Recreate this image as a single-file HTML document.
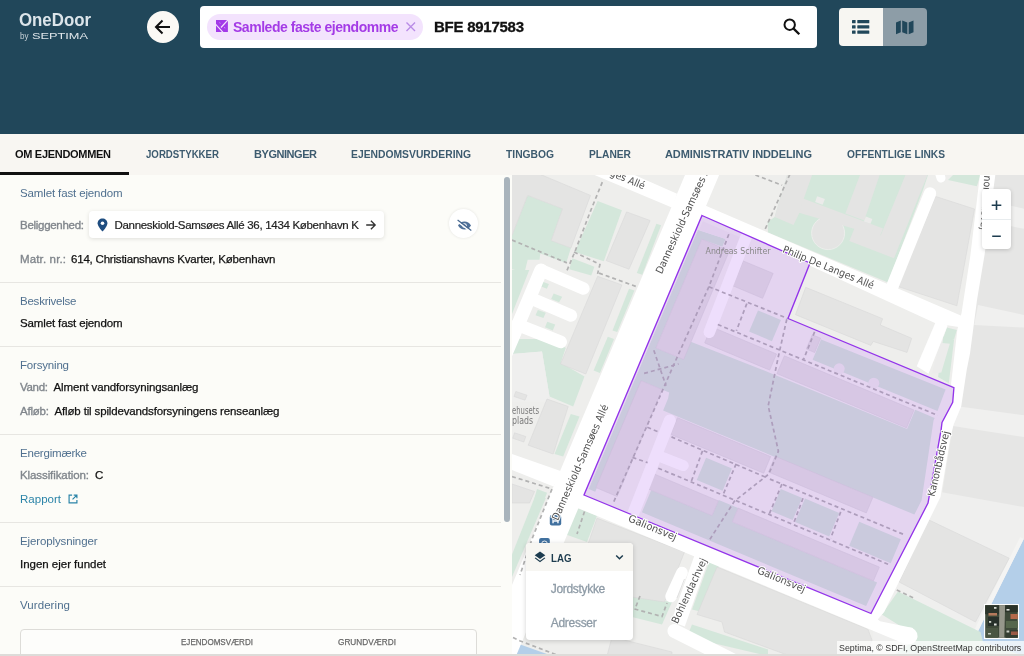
<!DOCTYPE html>
<html lang="da"><head><meta charset="utf-8"><title>OneDoor</title>
<style>
html,body{margin:0;padding:0;}
body{width:1024px;height:656px;overflow:hidden;position:relative;background:#fcfcf8;font-family:"Liberation Sans",sans-serif;}
.t{position:absolute;white-space:nowrap;line-height:20px;height:20px;}
.abs{position:absolute;}

.hdr{left:0;top:0;width:1024px;height:134px;background:#21475a;}
.tabs{left:0;top:134px;width:1024px;height:41px;background:#f8f6f2;}
.sep{left:0;width:501px;height:1px;background:#e7e6e2;}
.card{background:#fff;border-radius:4px;box-shadow:0 1px 4px rgba(0,0,0,.12);}

</style></head><body>
<svg class="abs" style="left:512px;top:175px;will-change:transform" width="512" height="481" viewBox="512 175 512 481"><rect x="512" y="175" width="512" height="481" fill="#eeeeec"/><polygon points="990.0,175.0 1024.0,175.0 1024.0,656.0 880.0,656.0 885.0,612.0 941.0,500.0 953.0,425.0 966.0,320.0 975.0,250.0" fill="#e6e6e5" /><polygon points="955.5,406.0 1024.0,415.2 1024.0,437.0 951.2,425.8" fill="#f0f0ef" /><polygon points="1008.0,205.0 1024.0,208.8 1024.0,228.8 1005.5,225.0" fill="#f0f0ef" /><polygon points="978.0,305.0 1024.0,315.0 1024.0,327.5 974.2,325.0" fill="#f0f0ef" /><polygon points="940.5,492.0 1024.0,507.0 1024.0,656.0 873.0,656.0 873.0,612.0" fill="#efefee" /><polygon points="1024.0,538.5 1024.0,656.0 965.4,656.0 979.3,628.2 995.4,596.0" fill="#b4cfe9" /><polyline points="1022.0,538.0 992.0,598.0 964.0,656.0" fill="none" stroke="#f4f4f3" stroke-width="4" /><polygon points="928.0,519.5 1009.2,558.2 975.5,622.0 899.2,582.0" fill="#e4e4e3" stroke="#d9d9d8" stroke-width="0.600"/><polygon points="881.8,614.5 898.0,591.5 980.5,632.0 983.0,642.0 1024.0,656.0 893.0,656.0 918.0,637.0" fill="#d4e7db" /><polygon points="527.7,195.4 562.5,208.8 551.2,240.6 570.9,248.0 566.2,262.9 540.3,253.5 539.5,259.8 527.7,259.8 524.6,272.3 512.0,269.2 512.0,235.4" fill="#d4e7db" /><polygon points="597.6,200.9 621.9,210.3 603.8,261.3 574.8,251.9" fill="#d4e7db" /><polygon points="572.4,258.2 594.4,266.8 591.3,275.5 569.3,269.2" fill="#d4e7db" /><polygon points="656.4,223.7 661.1,225.2 642.3,274.7 636.8,273.1" fill="#d4e7db" /><polygon points="629.0,288.8 634.4,290.4 617.2,332.0 612.5,330.4" fill="#d4e7db" /><polygon points="607.8,336.7 614.0,339.1 599.9,373.0 593.6,370.5" fill="#d4e7db" /><polygon points="512.0,270.0 529.3,270.0 512.0,314.0" fill="#d4e7db" /><polygon points="512.0,339.0 542.0,339.0 565.8,347.8 560.8,362.8 584.5,376.5 573.2,406.5 549.5,396.5 542.0,351.5 512.0,354.0" fill="#d4e7db" /><polygon points="570.8,414.0 579.5,416.5 563.2,456.5 554.5,454.0" fill="#d4e7db" /><polygon points="542.6,281.8 548.9,284.1 546.9,288.8 541.0,286.5" fill="#d4e7db" /><polygon points="553.6,293.5 562.2,296.7 559.1,302.2 551.2,299.0" fill="#d4e7db" /><polygon points="537.9,310.0 545.8,312.7 543.4,317.9 535.5,315.2" fill="#d4e7db" /><polygon points="547.3,321.8 555.2,324.6 552.8,330.4 545.0,327.3" fill="#d4e7db" /><polygon points="512.0,354.0 542.0,351.5 549.5,396.5 547.0,401.5 512.0,401.5" fill="#efefee" /><polygon points="510.4,173.4 537.9,173.4 590.5,195.4 570.9,248.0 551.2,240.6 562.5,208.8 527.7,195.4 512.0,235.4 510.4,235.4" fill="#e4e4e3" stroke="#d9d9d8" stroke-width="0.600"/><polygon points="626.6,211.9 650.1,220.5 629.0,269.2 606.2,260.6" fill="#e4e4e3" stroke="#d9d9d8" stroke-width="0.600"/><polygon points="597.6,276.3 621.9,284.9 585.8,374.0 560.5,364.0" fill="#e4e4e3" stroke="#d9d9d8" stroke-width="0.600"/><polygon points="547.0,399.0 568.2,406.5 553.2,454.0 528.2,445.2" fill="#e4e4e3" stroke="#d9d9d8" stroke-width="0.600"/><polygon points="515.8,391.5 527.0,395.2 525.0,400.2 514.0,396.5" fill="#e4e4e3" stroke="#d9d9d8" stroke-width="0.600"/><polygon points="514.5,432.8 525.8,436.5 523.8,442.0 512.8,438.2" fill="#e4e4e3" stroke="#d9d9d8" stroke-width="0.600"/><polygon points="767.6,222.1 774.7,217.1 787.3,174.2 928.0,175.0 923.0,190.0 888.0,282.5 768.0,232.5" fill="#d4e7db" /><circle cx="828.1" cy="233.1" r="16.500" fill="#e4e4e3" stroke="#efefee" stroke-width="0.800"/><polygon points="787.3,174.2 812.4,174.2 803.8,198.5 799.8,211.9 793.5,224.9 774.7,217.1" fill="#e4e4e3" /><polygon points="803.0,198.5 883.0,228.4 879.9,236.2 799.0,212.7" fill="#e4e4e3" /><polygon points="860.3,174.2 879.9,174.2 864.2,220.5 845.4,213.5" fill="#e4e4e3" /><polygon points="905.8,174.2 927.8,174.2 894.0,258.2 849.3,240.9 855.6,225.5 880.7,235.4" fill="#e4e4e3" /><polygon points="817.1,196.2 824.9,198.9 822.6,204.8 815.2,202.0" fill="#ebebea" /><polygon points="865.8,216.6 872.4,219.0 870.5,223.7 863.9,221.5" fill="#ebebea" /><polygon points="935.5,196.4 974.5,209.0 956.9,305.8 898.0,286.5" fill="#e4e4e3" stroke="#d9d9d8" stroke-width="0.600"/><polygon points="953.0,175.0 980.5,175.0 976.8,186.2 948.0,180.0" fill="#d4e7db" /><polygon points="946.8,327.5 956.8,330.0 954.2,339.0 943.0,339.0" fill="#d4e7db" /><polygon points="805.7,287.3 882.6,318.7 880.3,325.0 911.7,338.3 907.0,352.4 873.2,341.4 870.8,345.4 795.5,314.7" fill="#e4e4e3" stroke="#d9d9d8" stroke-width="0.600"/><polygon points="943.4,336.3 954.1,339.5 948.8,383.3 938.1,376.9" fill="#d4e7db" /><polygon points="940.2,342.7 949.8,343.8 941.3,372.6 931.7,373.7" fill="#ececeb" /><polygon points="574.5,507.0 597.0,515.8 587.0,542.0 565.8,534.5" fill="#d4e7db" /><polygon points="632.0,597.0 672.0,602.0 662.0,624.5 632.0,617.0" fill="#d4e7db" /><polygon points="709.5,560.8 719.5,564.5 702.0,612.0 692.0,609.5" fill="#d4e7db" /><polygon points="692.0,624.5 768.0,649.5 768.0,656.0 687.0,637.0" fill="#d4e7db" /><polygon points="597.0,518.2 684.5,552.0 664.5,602.0 632.0,597.0 633.2,609.5 587.0,592.0 584.5,574.5 587.0,547.0" fill="#e4e4e3" stroke="#d9d9d8" stroke-width="0.600"/><polygon points="717.0,567.0 868.0,629.4 872.0,640.0 866.0,656.0 790.0,656.0 724.5,632.0 722.0,622.0 697.0,614.5" fill="#e4e4e3" stroke="#d9d9d8" stroke-width="0.600"/><polygon points="612.0,637.0 672.0,652.0 672.0,656.0 607.0,656.0" fill="#e4e4e3" stroke="#d9d9d8" stroke-width="0.600"/><polygon points="535.8,494.5 545.8,498.2 512.0,577.0 512.0,554.5" fill="#d4e7db" /><polygon points="518.9,644.0 552.5,656.0 515.0,656.0" fill="#b4cfe9" /><polygon points="512.0,484.0 534.5,491.5 529.5,503.0 512.0,503.0" fill="#e4e4e3" stroke="#d9d9d8" stroke-width="0.600"/><polygon points="537.0,489.0 547.0,492.8 543.2,503.0 533.2,503.0" fill="#d4e7db" /><polygon points="685.0,175.0 719.1,175.0 516.0,656.0 482.0,656.0" fill="#ffffff" /><polygon points="700.0,203.3 966.0,317.7 962.0,327.6 936.0,323.6 700.0,215.1" fill="#ffffff" /><polygon points="677.0,193.7 634.5,175.0 594.5,175.0 673.0,208.0" fill="#ffffff" /><polyline points="892.5,286.0 930.0,193.5" fill="none" stroke="#ffffff" stroke-width="12.5" stroke-linecap="round"/><polygon points="980.5,170.0 970.4,255.2 961.6,312.8 957.3,330.0 951.0,384.4 953.9,387.7 952.7,402.3 942.0,422.4 941.1,429.8 928.0,503.0 871.0,613.5 873.0,625.0 884.2,612.0 940.5,497.0 950.5,437.0 953.5,425.0 961.2,406.6 966.7,370.0 970.0,353.4 977.0,300.0 984.5,255.2 996.0,170.0" fill="#ffffff" /><polygon points="935.9,321.4 947.7,325.6 928.5,373.7 916.7,366.2" fill="#ffffff" /><polyline points="938.0,168.0 941.0,178.0" fill="none" stroke="#ffffff" stroke-width="9" stroke-linecap="round"/><polygon points="570.0,488.2 871.0,613.5 880.0,621.2 913.0,628.0 905.0,644.0 570.0,504.7" fill="#ffffff" /><circle cx="909" cy="636" r="8.500" fill="#fff"/><polyline points="702.7,554.0 678.0,624.0" fill="none" stroke="#ffffff" stroke-width="14.5" /><polyline points="674.5,631.0 760.0,674.0" fill="none" stroke="#ffffff" stroke-width="14" stroke-linecap="round"/><polyline points="682.0,572.5 671.0,596.5" fill="none" stroke="#ffffff" stroke-width="11.5" stroke-linecap="round"/><polyline points="684.5,579.0 677.0,598.0" fill="none" stroke="#dedede" stroke-width="0.9" /><polygon points="510.0,453.2 562.0,471.6 553.5,486.5 510.0,469.3" fill="#ffffff" /><polyline points="541.0,270.3 512.0,339.0 500.0,367.0" fill="none" stroke="#ffffff" stroke-width="13.5" stroke-linecap="round"/><polyline points="542.0,270.7 583.4,288.5" fill="none" stroke="#ffffff" stroke-width="12.5" stroke-linecap="round"/><polyline points="529.5,297.7 570.9,315.5" fill="none" stroke="#ffffff" stroke-width="12.5" stroke-linecap="round"/><polyline points="517.2,324.6 560.7,341.9" fill="none" stroke="#ffffff" stroke-width="12.5" stroke-linecap="round"/><polyline points="602.3,182.1 590.5,211.1 574.8,251.9 566.2,272.3" fill="none" stroke="#b2b2b2" stroke-width="1.7" stroke-dasharray="4 3"/><polyline points="512.0,240.1 566.9,262.9" fill="none" stroke="#b2b2b2" stroke-width="1.7" stroke-dasharray="4 3"/><polyline points="574.0,251.9 599.9,264.5 597.6,273.9" fill="none" stroke="#b2b2b2" stroke-width="1.7" stroke-dasharray="4 3"/><polyline points="599.1,273.1 636.0,286.5" fill="none" stroke="#b2b2b2" stroke-width="1.7" stroke-dasharray="4 3"/><polyline points="512.0,476.5 552.0,489.0 532.0,539.0 520.0,575.0" fill="none" stroke="#b2b2b2" stroke-width="1.7" stroke-dasharray="4 3"/><polyline points="584.5,511.5 577.0,534.0" fill="none" stroke="#b2b2b2" stroke-width="1.7" stroke-dasharray="4 3"/><polyline points="634.5,609.0 662.0,616.5 667.0,603.0" fill="none" stroke="#b2b2b2" stroke-width="1.7" stroke-dasharray="4 3"/><polyline points="640.0,596.0 635.0,609.0" fill="none" stroke="#b2b2b2" stroke-width="1.7" stroke-dasharray="4 3"/><polyline points="513.0,637.5 519.7,640.8 552.5,653.3 562.0,657.0" fill="none" stroke="#b2b2b2" stroke-width="1.7" stroke-dasharray="4 3"/><polyline points="789.9,174.2 764.8,229.9" fill="none" stroke="#b2b2b2" stroke-width="1.7" stroke-dasharray="4 3"/><polyline points="755.4,175.0 782.1,185.2" fill="none" stroke="#b2b2b2" stroke-width="1.7" stroke-dasharray="4 3"/><polygon points="702.0,215.5 810.0,263.0 788.0,318.5 953.9,387.7 952.7,402.3 942.0,422.4 941.1,429.8 928.0,503.0 871.0,613.5 584.0,495.0" fill="#f3f3f1" /><polygon points="698.0,230.1 725.7,239.0 722.4,246.8 701.8,239.2 595.2,491.7 588.8,489.0" fill="#d4e7db" /><polygon points="702.8,221.3 740.5,237.5 734.4,251.8 722.4,246.8 725.7,239.0 699.1,230.0" fill="#efeeed" /><polygon points="758.0,310.4 780.9,320.0 771.9,341.2 749.1,331.6" fill="#d4e7db" /><polygon points="821.1,339.5 945.6,389.4 937.5,411.0 812.6,359.8" fill="#d4e7db" /><polygon points="679.9,337.4 772.0,373.7 907.1,429.1 915.2,409.8 934.6,417.9 933.5,420.6 921.6,500.2 914.4,514.6 663.1,410.6 668.1,398.6" fill="#d4e7db" /><polygon points="706.1,457.8 731.9,468.6 722.6,490.7 696.8,479.9" fill="#d4e7db" /><polygon points="780.8,489.1 802.1,497.9 792.7,520.0 771.5,511.2" fill="#d4e7db" /><polygon points="805.0,498.6 839.2,512.9 829.2,536.4 795.1,522.1" fill="#d4e7db" /><polygon points="859.3,521.8 900.8,539.2 890.7,563.2 849.2,545.8" fill="#d4e7db" /><polygon points="651.2,490.2 712.1,515.6 718.7,500.0 738.1,508.1 732.3,521.9 877.1,582.4 866.1,606.0 641.9,512.3" fill="#d4e7db" /><polygon points="654.9,347.6 684.5,359.9 670.5,393.1 641.0,380.7" fill="#d4e7db" /><circle cx="839.2" cy="368.8" r="5.500" fill="#eeeeec"/><circle cx="873.8" cy="383.2" r="5.500" fill="#eeeeec"/><polygon points="701.8,239.2 729.4,250.8 683.6,359.5 655.9,348.0" fill="#e4e4e3" stroke="#d9d9d8" stroke-width="0.600"/><polygon points="743.1,260.9 773.1,273.4 762.6,298.3 732.6,285.7" fill="#e4e4e3" stroke="#d9d9d8" stroke-width="0.600"/><polygon points="711.5,326.8 776.5,354.0 769.7,370.1 704.7,342.9" fill="#e4e4e3" stroke="#d9d9d8" stroke-width="0.600"/><polygon points="812.3,334.8 820.6,338.2 814.6,352.5 806.3,349.0" fill="#e4e4e3" stroke="#d9d9d8" stroke-width="0.600"/><polygon points="784.4,355.8 914.0,410.0 906.5,427.8 776.9,373.6" fill="#e4e4e3" stroke="#d9d9d8" stroke-width="0.600"/><polygon points="641.0,380.7 662.2,389.6 617.1,496.5 595.9,487.6" fill="#e4e4e3" stroke="#d9d9d8" stroke-width="0.600"/><polygon points="677.5,417.7 770.6,456.6 763.7,473.2 670.5,434.3" fill="#e4e4e3" stroke="#d9d9d8" stroke-width="0.600"/><polygon points="775.1,456.3 872.9,497.2 866.3,512.9 768.5,472.0" fill="#e4e4e3" stroke="#d9d9d8" stroke-width="0.600"/><polygon points="650.1,472.3 718.3,500.9 712.1,515.6 643.8,487.1" fill="#e4e4e3" stroke="#d9d9d8" stroke-width="0.600"/><polygon points="738.1,508.1 879.3,567.1 873.4,580.9 732.3,521.9" fill="#e4e4e3" stroke="#d9d9d8" stroke-width="0.600"/><polyline points="746.0,237.2 709.2,332.3" fill="none" stroke="#ffffff" stroke-width="11.5" stroke-linecap="round"/><polyline points="669.8,420.4 633.4,513.1" fill="none" stroke="#ffffff" stroke-width="12" stroke-linecap="round"/><polyline points="657.2,455.3 683.3,465.6" fill="none" stroke="#ffffff" stroke-width="11" stroke-linecap="round"/><polyline points="728.8,234.3 708.9,286.7 673.2,366.0 613.0,503.5" fill="none" stroke="#b2b2b2" stroke-width="1.7" stroke-dasharray="4 3"/><polyline points="708.9,286.7 787.2,318.3" fill="none" stroke="#b2b2b2" stroke-width="1.7" stroke-dasharray="4 3"/><polyline points="717.8,324.5 937.8,415.4" fill="none" stroke="#b2b2b2" stroke-width="1.7" stroke-dasharray="4 3"/><polyline points="746.8,303.6 736.4,330.7" fill="none" stroke="#b2b2b2" stroke-width="1.7" stroke-dasharray="4 3"/><polyline points="814.6,331.9 803.4,359.8" fill="none" stroke="#b2b2b2" stroke-width="1.7" stroke-dasharray="4 3"/><polyline points="769.9,479.1 904.8,534.9" fill="none" stroke="#b2b2b2" stroke-width="1.7" stroke-dasharray="4 3"/><polyline points="658.3,468.2 889.0,564.6" fill="none" stroke="#b2b2b2" stroke-width="1.7" stroke-dasharray="4 3"/><polyline points="671.5,436.9 765.3,477.1" fill="none" stroke="#b2b2b2" stroke-width="1.7" stroke-dasharray="4 3"/><polyline points="647.3,427.3 658.4,431.9" fill="none" stroke="#b2b2b2" stroke-width="1.7" stroke-dasharray="4 3"/><polyline points="632.5,457.4 647.6,462.6" fill="none" stroke="#b2b2b2" stroke-width="1.7" stroke-dasharray="4 3"/><polyline points="653.8,350.3 666.0,385.8" fill="none" stroke="#b2b2b2" stroke-width="1.7" stroke-dasharray="4 3"/><polyline points="644.1,373.4 678.5,363.9" fill="none" stroke="#b2b2b2" stroke-width="1.7" stroke-dasharray="4 3"/><polyline points="786.8,319.2 778.5,355.8 768.2,405.8 778.4,451.2 768.7,474.2 734.5,501.1 709.2,540.4" fill="none" stroke="#b2b2b2" stroke-width="1.7" stroke-dasharray="4 3"/><polyline points="803.0,498.3 794.2,521.7" fill="none" stroke="#b2b2b2" stroke-width="1.7" stroke-dasharray="4 3"/><polyline points="840.7,511.9 830.7,538.1" fill="none" stroke="#b2b2b2" stroke-width="1.7" stroke-dasharray="4 3"/><polyline points="781.9,484.1 769.0,514.5" fill="none" stroke="#b2b2b2" stroke-width="1.7" stroke-dasharray="4 3"/><polyline points="702.5,450.9 691.1,481.9" fill="none" stroke="#b2b2b2" stroke-width="1.7" stroke-dasharray="4 3"/><polyline points="736.1,463.9 722.9,495.2" fill="none" stroke="#b2b2b2" stroke-width="1.7" stroke-dasharray="4 3"/><polyline points="896.8,590.0 914.2,598.2" fill="none" stroke="#b2b2b2" stroke-width="1.7" stroke-dasharray="4 3"/><polygon points="702.0,215.5 810.0,263.0 788.0,318.5 953.9,387.7 952.7,402.3 942.0,422.4 941.1,429.8 928.0,503.0 871.0,613.5 584.0,495.0" fill="rgba(147,51,234,0.16)" stroke="#9333ea" stroke-width="1.350" stroke-linejoin="miter"/><rect x="549.800" y="514.900" width="11.400" height="10.700" rx="2" fill="#41719f"/><path d="M552.300 517.500h6.400v5.800h-1.500v-1.600h-3.400v1.600h-1.500z" fill="#eef3f8"/><rect x="553.300" y="518.400" width="4.400" height="1.800" fill="#41719f"/><rect x="539.100" y="538.100" width="10.700" height="10.700" rx="2" fill="#41719f"/><circle cx="544.500" cy="543.800" r="2.800" fill="none" stroke="#eef3f8" stroke-width="1"/><text font-family="DejaVu Sans, Liberation Sans, sans-serif" x="828.5" y="267.3" transform="rotate(22.3 828.5 267.3)" font-size="10.2" font-weight="400" fill="#505050" text-anchor="middle" dominant-baseline="central" textLength="97.6" lengthAdjust="spacingAndGlyphs" paint-order="stroke" stroke="#ffffff" stroke-width="2.200" stroke-linejoin="round">Philip De Langes Allé</text><text font-family="DejaVu Sans, Liberation Sans, sans-serif" x="599.6" y="167.5" transform="rotate(22.7 599.6 167.5)" font-size="10.2" font-weight="400" fill="#505050" text-anchor="middle" dominant-baseline="central" textLength="97.6" lengthAdjust="spacingAndGlyphs" paint-order="stroke" stroke="#ffffff" stroke-width="2.200" stroke-linejoin="round">Philip De Langes Allé</text><text font-family="DejaVu Sans, Liberation Sans, sans-serif" x="684.9" y="215.7" transform="rotate(-65.3 684.9 215.7)" font-size="10.2" font-weight="400" fill="#505050" text-anchor="middle" dominant-baseline="central" textLength="126.0" lengthAdjust="spacingAndGlyphs" paint-order="stroke" stroke="#ffffff" stroke-width="2.200" stroke-linejoin="round">Danneskiold-Samsøes Allé</text><text font-family="DejaVu Sans, Liberation Sans, sans-serif" x="580.1" y="462.3" transform="rotate(-66.2 580.1 462.3)" font-size="10.2" font-weight="400" fill="#505050" text-anchor="middle" dominant-baseline="central" textLength="125.0" lengthAdjust="spacingAndGlyphs" paint-order="stroke" stroke="#ffffff" stroke-width="2.200" stroke-linejoin="round">Danneskiold-Samsøes Allé</text><text font-family="DejaVu Sans, Liberation Sans, sans-serif" x="938.6" y="463.6" transform="rotate(-77.0 938.6 463.6)" font-size="10.2" font-weight="400" fill="#505050" text-anchor="middle" dominant-baseline="central" textLength="66.7" lengthAdjust="spacingAndGlyphs" paint-order="stroke" stroke="#ffffff" stroke-width="2.200" stroke-linejoin="round">Kanonbådsvej</text><text font-family="DejaVu Sans, Liberation Sans, sans-serif" x="986.3" y="196.8" transform="rotate(94.0 986.3 196.8)" font-size="10.2" font-weight="400" fill="#505050" text-anchor="middle" dominant-baseline="central" textLength="66.7" lengthAdjust="spacingAndGlyphs" paint-order="stroke" stroke="#ffffff" stroke-width="2.200" stroke-linejoin="round">Kanonbådsvej</text><text font-family="DejaVu Sans, Liberation Sans, sans-serif" x="652.7" y="527.6" transform="rotate(22.2 652.7 527.6)" font-size="10.2" font-weight="400" fill="#505050" text-anchor="middle" dominant-baseline="central" textLength="51.4" lengthAdjust="spacingAndGlyphs" paint-order="stroke" stroke="#ffffff" stroke-width="2.200" stroke-linejoin="round">Galionsvej</text><text font-family="DejaVu Sans, Liberation Sans, sans-serif" x="781.5" y="579.5" transform="rotate(22.4 781.5 579.5)" font-size="10.2" font-weight="400" fill="#505050" text-anchor="middle" dominant-baseline="central" textLength="51.4" lengthAdjust="spacingAndGlyphs" paint-order="stroke" stroke="#ffffff" stroke-width="2.200" stroke-linejoin="round">Galionsvej</text><text font-family="DejaVu Sans, Liberation Sans, sans-serif" x="689.2" y="590.7" transform="rotate(-65.2 689.2 590.7)" font-size="10.2" font-weight="400" fill="#505050" text-anchor="middle" dominant-baseline="central" textLength="70.5" lengthAdjust="spacingAndGlyphs" paint-order="stroke" stroke="#ffffff" stroke-width="2.200" stroke-linejoin="round">Bohlendachvej</text><text font-family="DejaVu Sans, Liberation Sans, sans-serif" x="738.0" y="250.8" transform="rotate(0.0 738.0 250.8)" font-size="9.5" font-weight="400" fill="#888888" text-anchor="middle" dominant-baseline="central" textLength="65.0" lengthAdjust="spacingAndGlyphs">Andreas Schifter</text><text font-family="DejaVu Sans, Liberation Sans, sans-serif" x="512.0" y="410.0" transform="rotate(0.0 512.0 410.0)" font-size="10" font-weight="400" fill="#7a7a7a" text-anchor="start" dominant-baseline="central" textLength="27.0" lengthAdjust="spacingAndGlyphs">ehusets</text><text font-family="DejaVu Sans, Liberation Sans, sans-serif" x="512.0" y="420.5" transform="rotate(0.0 512.0 420.5)" font-size="10" font-weight="400" fill="#7a7a7a" text-anchor="start" dominant-baseline="central" textLength="21.0" lengthAdjust="spacingAndGlyphs">plads</text></svg>
<div class="abs hdr"></div><div class="abs tabs"></div><div class="abs" style="left:0;top:172px;width:129px;height:3px;background:#111;"></div><div class="abs" style="left:147px;top:11px;width:32px;height:32px;border-radius:50%;background:#fbf9f5;"></div><svg class="abs" style="left:147px;top:11px" width="32" height="32" viewBox="0 0 32 32"><path d="M23 16H9.5M15.5 9.5L9 16l6.500 6.500" fill="none" stroke="#111" stroke-width="2" stroke-linecap="butt" stroke-linejoin="miter"/></svg><div class="abs" style="left:200px;top:6px;width:617px;height:42px;border-radius:4px;background:#fff;"></div><div class="abs" style="left:207px;top:14px;width:216px;height:26px;border-radius:13px;background:#f3e3fd;"></div><svg class="abs" style="left:215.900px;top:20.200px" width="12" height="12.300" viewBox="0 0 12 12.300"><rect x="0" y="0" width="11.900" height="12.300" fill="#a33ae8"/><path d="M-0.300 4.300L7.200 12.600M12 -0.200L5 7.500" stroke="#f3e3fd" stroke-width="1.150" fill="none"/><path d="M3.700 2.500l0.500 1M8.500 7.200l0.500 1.100" stroke="#e2b8fa" stroke-width="0.800" fill="none"/></svg><svg class="abs" style="left:405px;top:21px" width="12" height="12" viewBox="0 0 12 12"><path d="M1.500 1.500l8.500 8.500M10 1.500l-8.500 8.500" stroke="#b98be6" stroke-width="1.400" fill="none"/></svg><svg class="abs" style="left:781px;top:16px" width="22" height="22" viewBox="0 0 22 22"><circle cx="8.700" cy="8.700" r="5.200" fill="none" stroke="#111" stroke-width="2"/><path d="M12.600 12.600L18.300 18.300" stroke="#111" stroke-width="2.300" fill="none"/></svg><div class="abs" style="left:839px;top:8px;width:44px;height:37.500px;border-radius:4px 0 0 4px;background:#f7f6f2;"></div><div class="abs" style="left:883px;top:8px;width:44px;height:37.500px;border-radius:0 4px 4px 0;background:#8d9da7;"></div><svg class="abs" style="left:852px;top:20px" width="18" height="14" viewBox="0 0 18 14"><g fill="#21475a"><rect x="0" y="0" width="3.600" height="3.200" rx=".5"/><rect x="5.300" y="0" width="12" height="3.200" rx=".5"/><rect x="0" y="5.300" width="3.600" height="3.200" rx=".5"/><rect x="5.300" y="5.300" width="12" height="3.200" rx=".5"/><rect x="0" y="10.600" width="3.600" height="3.200" rx=".5"/><rect x="5.300" y="10.600" width="12" height="3.200" rx=".5"/></g></svg><svg class="abs" style="left:895.500px;top:19.500px" width="18" height="15" viewBox="0 0 18 15"><g fill="#21475a"><path d="M0 2.500L4.800 0.500V12.200L0 14.200z"/><path d="M6.200 0.500L11.300 2.500V14.200L6.200 12.200z"/><path d="M12.700 2.500L17.500 0.500V12.200L12.700 14.200z"/></g></svg><div class="abs sep" style="top:282px"></div><div class="abs sep" style="top:345.7px"></div><div class="abs sep" style="top:434.2px"></div><div class="abs sep" style="top:522.4px"></div><div class="abs sep" style="top:586.1px"></div><div class="abs" style="left:504px;top:177px;width:5.500px;height:345px;border-radius:3px;background:#a9b4bc;"></div><div class="abs card" style="left:89px;top:210.500px;width:294.700px;height:27px;"></div><svg class="abs" style="left:97px;top:218px" width="11" height="14" viewBox="0 0 11 14"><path d="M5.500 0.500C2.700 0.500 0.600 2.600 0.600 5.300c0 3.400 4.900 8.200 4.900 8.200s4.900-4.800 4.900-8.200C10.400 2.600 8.300 0.500 5.500 0.500z" fill="#1f4d80"/><circle cx="5.500" cy="5.200" r="1.800" fill="#fff"/></svg><svg class="abs" style="left:365px;top:218.600px" width="12" height="12" viewBox="0 0 12 12"><path d="M1.200 6h8.800M5.900 1.700L10.200 6l-4.300 4.300" fill="none" stroke="#333" stroke-width="1.300"/></svg><div class="abs" style="left:449px;top:209px;width:29px;height:29px;border-radius:50%;background:#fff;box-shadow:0 0 3px rgba(0,0,0,.10);"></div><svg class="abs" style="left:456.500px;top:218.500px" width="15" height="12" viewBox="0 0 15 12"><path d="M1 6.500C2.500 3.900 4.800 2.600 7.500 2.600S12.500 3.900 14 6.500C12.500 9.100 10.200 10.400 7.500 10.400S2.500 9.100 1 6.500z" fill="#4f7099"/><circle cx="7.500" cy="6.500" r="2.300" fill="#fff"/><circle cx="7.500" cy="6.500" r="1.200" fill="#4f7099"/><path d="M-0.400 1.900L13.300 12.300" stroke="#fff" stroke-width="1.500"/><path d="M0.600 1L14.300 11.400" stroke="#46678f" stroke-width="1.200"/></svg><svg class="abs" style="left:68px;top:494.200px" width="10" height="10" viewBox="0 0 11 11"><path d="M4.500 1.200H1.200V9.800H9.800V6.500" fill="none" stroke="#2b84a8" stroke-width="1.300"/><path d="M6.300 1.200H9.800V4.700M9.800 1.200L5 6" fill="none" stroke="#2b84a8" stroke-width="1.300"/></svg><div class="abs" style="left:20px;top:628.500px;width:457px;height:40px;border:1px solid #dddcd8;border-radius:4px;background:#fdfdfb;box-sizing:border-box;"></div><div class="abs" style="left:981.500px;top:189px;width:29.500px;height:59.500px;border-radius:4px;background:#fff;box-shadow:0 1px 4px rgba(0,0,0,.18);"></div><div class="abs" style="left:982px;top:219px;width:29px;height:1px;background:#e8ecee;"></div><svg class="abs" style="left:982px;top:189.500px" width="29" height="59" viewBox="0 0 29 59"><path d="M9.700 15.300h9.600M14.500 10.500v9.600M10.200 46.300h8.600" stroke="#1d3c4f" stroke-width="1.600" fill="none"/></svg><div class="abs" style="left:526px;top:543px;width:107px;height:97px;border-radius:4px;background:#fff;box-shadow:0 1px 5px rgba(0,0,0,.18);overflow:hidden;"><div style="height:27.500px;background:#f7f6f2;"></div></div><svg class="abs" style="left:534px;top:551px" width="12" height="12" viewBox="0 0 12 12"><path d="M6 0.500L11.300 4.300 6 8.100 0.700 4.300z" fill="#1d3c4f"/><path d="M1.500 6.600L6 9.800 10.500 6.600 11.300 7.300 6 11.200 0.700 7.300z" fill="#1d3c4f"/></svg><svg class="abs" style="left:615px;top:553.500px" width="9" height="7" viewBox="0 0 9 7"><path d="M1.200 1.500L4.500 4.800 7.800 1.500" stroke="#1d3c4f" stroke-width="1.500" fill="none"/></svg><div class="abs" style="left:836.500px;top:641px;width:187.500px;height:15px;background:rgba(255,255,255,.72);"></div><svg class="abs" style="left:984px;top:604px" width="35" height="35" viewBox="0 0 35 35"><rect x="0" y="0" width="35" height="35" fill="#fff"/><rect x="1.200" y="1.200" width="32.600" height="32.600" fill="#3e4939"/><rect x="1.200" y="1.200" width="14" height="9" fill="#2c352b"/><rect x="4" y="13" width="11" height="9" fill="#27302a"/><rect x="2" y="24" width="12" height="9.800" fill="#4a5643"/><rect x="21" y="1.200" width="12.800" height="7" fill="#2b3329"/><rect x="22" y="17" width="11.800" height="7" fill="#56664c"/><rect x="21.500" y="26" width="12.300" height="7.800" fill="#343d31"/><path d="M15.300 1.200h5.800l-0.800 32.600h-5.200z" fill="#96978b"/><rect x="4.500" y="9" width="8.500" height="2.600" fill="#b47a5c"/><rect x="26.500" y="10" width="7.300" height="5" fill="#b4694a"/><rect x="27" y="27.500" width="6.800" height="3.500" fill="#9a5a46"/><rect x="10" y="3" width="2.500" height="1.800" fill="#d9ddd6"/><rect x="22.500" y="5" width="3" height="1.600" fill="#dfe2dc"/><rect x="5" y="17" width="2.200" height="1.800" fill="#cfd5cc"/><rect x="10" y="19.500" width="2.600" height="2" fill="#e2e5e0"/><rect x="22.500" y="26.500" width="2.800" height="2" fill="#c9cec5"/><rect x="4" y="29" width="3" height="1.500" fill="#bfc6ba"/></svg>
<div class="abs" style="left:0;top:0;width:1024px;height:656px;will-change:transform;"><span class="t" style="left:19.00px;top:10.02px;font-size:19px;font-weight:700;color:#dce5ea;letter-spacing:0.000px;transform:scaleX(0.8858);transform-origin:0 50%;">OneDoor</span><span class="t" style="left:19.50px;top:25.71px;font-size:9.5px;font-weight:400;color:#c5d0d6;letter-spacing:0.000px;transform:scaleX(0.8472);transform-origin:0 50%;">by</span><span class="t" style="left:32.00px;top:25.88px;font-size:9px;font-weight:400;color:#dfe6ea;letter-spacing:0.000px;transform:scaleX(1.4175);transform-origin:0 50%;">SEPTIMA</span><span class="t" style="left:233.00px;top:17.15px;font-size:14px;font-weight:700;color:#a43be6;letter-spacing:-0.470px;">Samlede faste ejendomme</span><span class="t" style="left:434.00px;top:17.10px;font-size:15px;font-weight:700;color:#111;letter-spacing:-0.256px;-webkit-text-stroke:0.3px #111;">BFE 8917583</span><span class="t" style="left:15.00px;top:144.19px;font-size:11px;font-weight:700;color:#111;letter-spacing:-0.302px;">OM EJENDOMMEN</span><span class="t" style="left:146.00px;top:144.19px;font-size:11px;font-weight:700;color:#3d5b6f;letter-spacing:0.000px;transform:scaleX(0.8782);transform-origin:0 50%;">JORDSTYKKER</span><span class="t" style="left:254.00px;top:144.19px;font-size:11px;font-weight:700;color:#3d5b6f;letter-spacing:-0.452px;">BYGNINGER</span><span class="t" style="left:351.00px;top:144.19px;font-size:11px;font-weight:700;color:#3d5b6f;letter-spacing:0.000px;transform:scaleX(0.9394);transform-origin:0 50%;">EJENDOMSVURDERING</span><span class="t" style="left:506.00px;top:144.19px;font-size:11px;font-weight:700;color:#3d5b6f;letter-spacing:0.000px;transform:scaleX(0.9351);transform-origin:0 50%;">TINGBOG</span><span class="t" style="left:589.00px;top:144.19px;font-size:11px;font-weight:700;color:#3d5b6f;letter-spacing:0.000px;transform:scaleX(0.9287);transform-origin:0 50%;">PLANER</span><span class="t" style="left:665.00px;top:144.19px;font-size:11px;font-weight:700;color:#3d5b6f;letter-spacing:-0.087px;">ADMINISTRATIV INDDELING</span><span class="t" style="left:847.00px;top:144.19px;font-size:11px;font-weight:700;color:#3d5b6f;letter-spacing:0.000px;transform:scaleX(0.9270);transform-origin:0 50%;">OFFENTLIGE LINKS</span><span class="t" style="left:20.00px;top:183.32px;font-size:11.5px;font-weight:400;color:#50708f;letter-spacing:-0.130px;">Samlet fast ejendom</span><span class="t" style="left:20.00px;top:214.82px;font-size:11.5px;font-weight:400;color:#80868c;letter-spacing:-0.286px;-webkit-text-stroke:0.35px #80868c;">Beliggenhed:</span><span class="t" style="left:114.50px;top:214.82px;font-size:11.5px;font-weight:400;color:#222;letter-spacing:-0.313px;-webkit-text-stroke:0.2px #222;">Danneskiold-Samsøes Allé 36, 1434 København K</span><span class="t" style="left:20.00px;top:249.32px;font-size:11.5px;font-weight:400;color:#80868c;letter-spacing:0.140px;-webkit-text-stroke:0.35px #80868c;">Matr. nr.:</span><span class="t" style="left:71.00px;top:249.32px;font-size:11.5px;font-weight:400;color:#111;letter-spacing:-0.203px;-webkit-text-stroke:0.25px #111;">614, Christianshavns Kvarter, København</span><span class="t" style="left:20.00px;top:291.32px;font-size:11.5px;font-weight:400;color:#50708f;letter-spacing:-0.230px;">Beskrivelse</span><span class="t" style="left:20.00px;top:313.32px;font-size:11.5px;font-weight:400;color:#111;letter-spacing:-0.130px;-webkit-text-stroke:0.25px #111;">Samlet fast ejendom</span><span class="t" style="left:20.00px;top:355.32px;font-size:11.5px;font-weight:400;color:#50708f;letter-spacing:-0.187px;">Forsyning</span><span class="t" style="left:20.00px;top:377.32px;font-size:11.5px;font-weight:400;color:#80868c;letter-spacing:-0.300px;-webkit-text-stroke:0.35px #80868c;">Vand:</span><span class="t" style="left:53.50px;top:377.32px;font-size:11.5px;font-weight:400;color:#111;letter-spacing:-0.132px;-webkit-text-stroke:0.25px #111;">Alment vandforsyningsanlæg</span><span class="t" style="left:20.00px;top:401.32px;font-size:11.5px;font-weight:400;color:#80868c;letter-spacing:-0.207px;-webkit-text-stroke:0.35px #80868c;">Afløb:</span><span class="t" style="left:54.50px;top:401.32px;font-size:11.5px;font-weight:400;color:#111;letter-spacing:-0.149px;-webkit-text-stroke:0.25px #111;">Afløb til spildevandsforsyningens renseanlæg</span><span class="t" style="left:20.00px;top:443.32px;font-size:11.5px;font-weight:400;color:#50708f;letter-spacing:-0.202px;">Energimærke</span><span class="t" style="left:20.00px;top:465.02px;font-size:11.5px;font-weight:400;color:#80868c;letter-spacing:-0.093px;-webkit-text-stroke:0.35px #80868c;">Klassifikation:</span><span class="t" style="left:95.00px;top:465.02px;font-size:11.5px;font-weight:400;color:#111;letter-spacing:0.000px;-webkit-text-stroke:0.25px #111;">C</span><span class="t" style="left:20.00px;top:489.02px;font-size:11.5px;font-weight:400;color:#2b84a8;letter-spacing:0.015px;">Rapport</span><span class="t" style="left:20.00px;top:531.32px;font-size:11.5px;font-weight:400;color:#50708f;letter-spacing:-0.126px;">Ejeroplysninger</span><span class="t" style="left:20.00px;top:553.62px;font-size:11.5px;font-weight:400;color:#111;letter-spacing:-0.020px;-webkit-text-stroke:0.25px #111;">Ingen ejer fundet</span><span class="t" style="left:20.00px;top:595.32px;font-size:11.5px;font-weight:400;color:#50708f;letter-spacing:0.070px;">Vurdering</span><span class="t" style="left:180.50px;top:631.78px;font-size:9.3px;font-weight:400;color:#666;letter-spacing:0.000px;transform:scaleX(0.8655);transform-origin:0 50%;-webkit-text-stroke:0.25px #666;">EJENDOMSVÆRDI</span><span class="t" style="left:337.50px;top:631.78px;font-size:9.3px;font-weight:400;color:#666;letter-spacing:0.000px;transform:scaleX(0.8839);transform-origin:0 50%;-webkit-text-stroke:0.25px #666;">GRUNDVÆRDI</span><span class="t" style="left:550.70px;top:547.79px;font-size:11px;font-weight:700;color:#1d3c4f;letter-spacing:0.000px;transform:scaleX(0.8829);transform-origin:0 50%;">LAG</span><span class="t" style="left:550.80px;top:579.04px;font-size:12px;font-weight:400;color:#8e9ba6;letter-spacing:-0.317px;-webkit-text-stroke:0.3px #8e9ba6;">Jordstykke</span><span class="t" style="left:550.80px;top:613.44px;font-size:12px;font-weight:400;color:#8e9ba6;letter-spacing:-0.303px;-webkit-text-stroke:0.3px #8e9ba6;">Adresser</span><span class="t" style="left:839.30px;top:638.17px;font-size:9.6px;font-weight:400;color:#333;letter-spacing:0.000px;transform:scaleX(0.9208);transform-origin:0 50%;">Septima, © SDFI, OpenStreetMap contributors</span></div>
<div class="abs" style="left:0;top:653.600px;width:1024px;height:2.400px;background:#dddcd9;"></div>
</body></html>
